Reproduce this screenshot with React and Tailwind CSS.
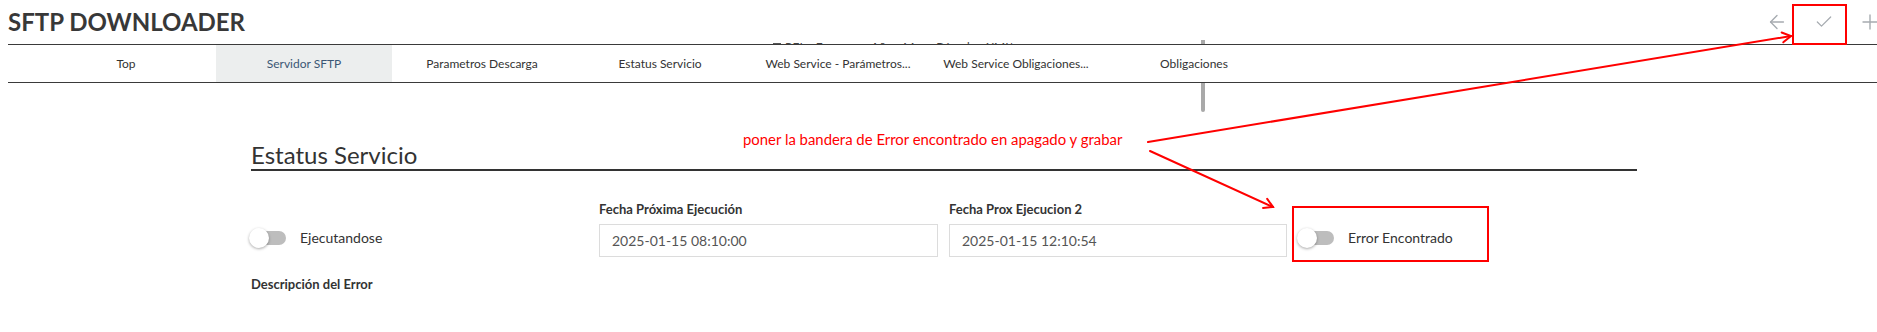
import React from "react";
import { ArrowLeft, Check, Plus } from "lucide-react";

const tabs = [
  "Top",
  "Servidor SFTP",
  "Parametros Descarga",
  "Estatus Servicio",
  "Web Service - Parámetros...",
  "Web Service Obligaciones...",
  "Obligaciones",
];

function Toggle() {
  return (
    <div className="relative w-[37px] h-[20px] shrink-0">
      <div className="absolute left-[3px] top-[3px] w-[34px] h-[14px] rounded-full bg-[#bdbdbd]" />
      <div className="absolute left-0 top-0 w-[20px] h-[20px] rounded-full bg-white shadow-[0_1px_3px_rgba(0,0,0,0.35)]" />
    </div>
  );
}

function Arrow({ x1, y1, x2, y2 }) {
  const ang = Math.atan2(y2 - y1, x2 - x1) + Math.PI;
  const L = 10;
  const a1 = ang + Math.PI / 6;
  const a2 = ang - Math.PI / 6;
  const w1 = [x2 + L * Math.cos(a1), y2 + L * Math.sin(a1)];
  const w2 = [x2 + L * Math.cos(a2), y2 + L * Math.sin(a2)];
  return (
    <g stroke="#ff0000" strokeWidth="2" fill="none" strokeLinecap="round">
      <line x1={x1} y1={y1} x2={x2} y2={y2} />
      <polyline points={`${w1[0]},${w1[1]} ${x2},${y2} ${w2[0]},${w2[1]}`} />
    </g>
  );
}

export default function App() {
  return (
    <div className="relative w-[1877px] h-[332px] overflow-hidden bg-white font-['Lato',sans-serif] text-[#333]">
      {/* things peeking from behind the tab bar */}
      <div className="absolute left-[773px] top-[40px] z-0 flex items-center gap-[4px] text-[12px] leading-[14px] text-[#444] whitespace-nowrap">
        <span className="inline-block w-[8px] h-[8px] border border-[#555]" />
        <span>REL - Empresa - Año - Mes - Bóveda - XML's</span>
      </div>
      <div className="absolute left-[1201px] top-[40px] z-0 w-[4px] h-[72px] rounded-b-full bg-[#a9a9a9]" />

      {/* header */}
      <div className="relative z-10 ml-[8px] flex h-[45px] items-center justify-between border-b border-[#3a3a3a]">
        <h1 className="text-[24px] font-bold text-[#383838]">SFTP DOWNLOADER</h1>
        <div className="mr-[-5px] flex items-center text-[#a6abb0]">
          <ArrowLeft size={22} strokeWidth={1.5} />
          <Check size={20} strokeWidth={1.5} className="ml-[26px]" />
          <Plus size={24} strokeWidth={1.4} className="ml-[24px]" />
        </div>
      </div>

      {/* tabs */}
      <div className="relative z-10 ml-[8px] flex h-[38px] border-b border-[#3a3a3a] bg-white pl-[29px]">
        {tabs.map((t, i) => (
          <div
            key={t}
            className={
              "mx-[1px] flex w-[176px] items-center justify-center text-[12px] whitespace-nowrap " +
              (i === 1 ? "bg-[#eceeee] text-[#3b5775]" : "text-[#333]")
            }
          >
            {t}
          </div>
        ))}
      </div>

      {/* content */}
      <div className="relative z-10 ml-[251px] w-[1386px] pt-[58px]">
        <h2 className="border-b-2 border-[#333] text-[24px] leading-[28px] font-normal text-[#333]">
          Estatus Servicio
        </h2>

        <div className="mt-[30px] grid grid-cols-[348px_350px_349px_1fr]">
          <div className="flex flex-col justify-end">
            <div className="mb-[3px] ml-[-2px] flex h-[33px] items-center gap-[14px]">
              <Toggle />
              <span className="text-[14px]">Ejecutandose</span>
            </div>
          </div>
          <div className="flex flex-col">
            <label className="mb-[7px] text-[13px] leading-[16px] font-bold">Fecha Próxima Ejecución</label>
            <div className="flex h-[33px] w-[339px] items-center border border-[#dcdcdc] pl-[12px] text-[14px] text-[#555]">
              2025-01-15 08:10:00
            </div>
          </div>
          <div className="flex flex-col">
            <label className="mb-[7px] text-[13px] leading-[16px] font-bold">Fecha Prox Ejecucion 2</label>
            <div className="flex h-[33px] w-[338px] items-center border border-[#dcdcdc] pl-[12px] text-[14px] text-[#555]">
              2025-01-15 12:10:54
            </div>
          </div>
          <div className="flex flex-col justify-end">
            <div className="mb-[3px] ml-[-1px] flex h-[33px] items-center gap-[14px]">
              <Toggle />
              <span className="text-[14px]">Error Encontrado</span>
            </div>
          </div>
        </div>

        <div className="mt-[19px] text-[13px] leading-[16px] font-bold">Descripción del Error</div>
      </div>

      {/* annotations */}
      <div className="absolute left-[743px] top-[130px] z-20 text-[14.9px] leading-[18px] text-[#ff0000] whitespace-nowrap">
        poner la bandera de Error encontrado en apagado y grabar
      </div>
      <div className="absolute left-[1792px] top-[4px] z-20 h-[41px] w-[55px] border-2 border-[#ff0000]" />
      <div className="absolute left-[1292px] top-[206px] z-20 h-[56px] w-[197px] border-2 border-[#ff0000]" />
      <svg className="pointer-events-none absolute inset-0 z-30" width="1877" height="332">
        <Arrow x1={1148} y1={142} x2={1791} y2={36} />
        <Arrow x1={1150} y1={151} x2={1273} y2={207} />
      </svg>
    </div>
  );
}
